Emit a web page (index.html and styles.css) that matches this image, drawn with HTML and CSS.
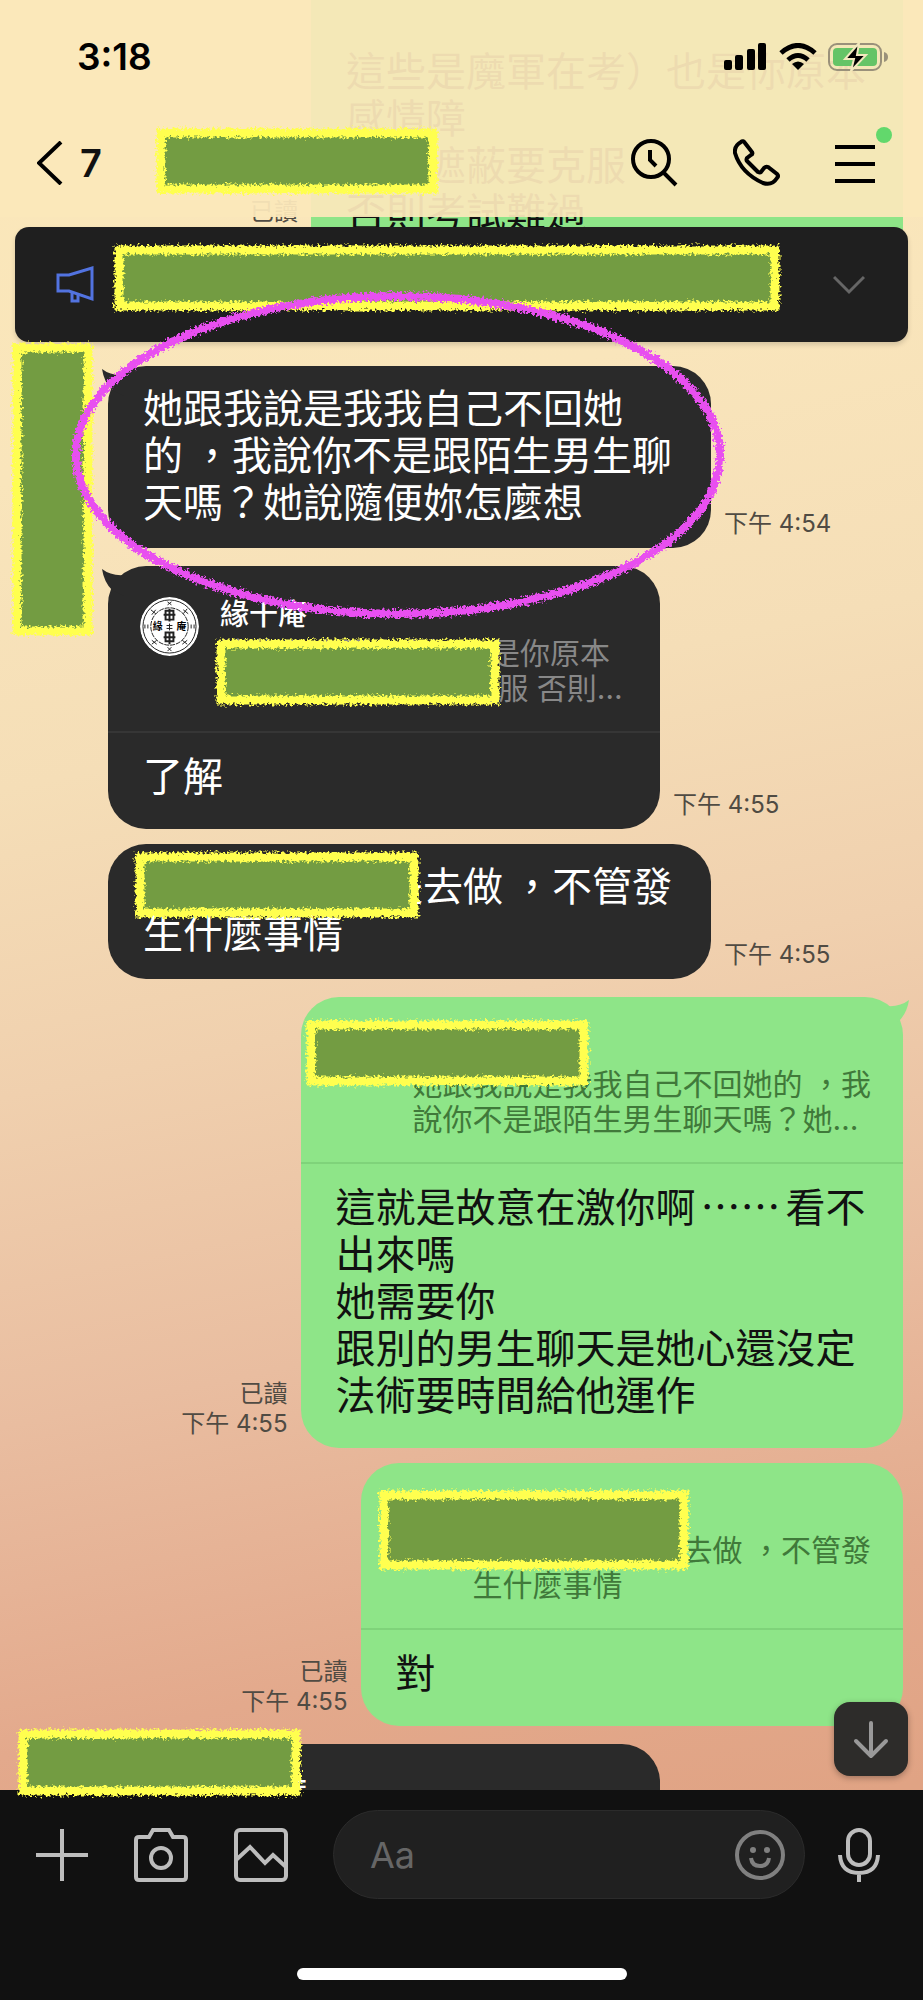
FILE: index.html
```html
<!DOCTYPE html>
<html lang="zh-Hant">
<head>
    <meta charset="utf-8">
    <title>Chat</title>
    <link rel="stylesheet" href="styles.css">
</head>
<body>
    <div class="phone">

        <!-- Conversation, runs underneath the header -->
        <main class="chat">
            <div class="row mine cut">
                <div class="meta">已讀<br>下午 4:53</div>
                <div class="bubble">
                    <p class="text">這些是魔軍在考）也是你原本<br>感情障<br>　　遮蔽要克服<br>否則考試難過</p>
                </div>
            </div>

            <div class="row theirs first">
                <div class="bubble">
                    <svg class="tail" viewBox="0 0 24 30"><path d="M0 3Q9 10 22 9V30L10 24Q2 16 0 3Z"/></svg>
                    <p class="text">她跟我說是我我自己不回她<br>的 ，我說你不是跟陌生男生聊<br>天嗎？她說隨便妳怎麼想</p>
                </div>
                <div class="meta">下午 4:54</div>
            </div>

            <div class="row theirs next">
                <div class="bubble fixed">
                    <svg class="tail" viewBox="0 0 24 30"><path d="M0 3Q9 10 22 9V30L10 24Q2 16 0 3Z"/></svg>
                    <div class="quote">
                        <svg class="avatar" viewBox="0 0 60 60">
                            <circle cx="30" cy="30" r="30" fill="#fff"/>
                            <g fill="none" stroke="#222">
                                <circle cx="30" cy="30" r="27" stroke-width="1"/>
                                <circle cx="30" cy="30" r="19" stroke-width="1" stroke-dasharray="5 1"/>
                                <path stroke-width="2" d="M26 14h8v9h-8zM24 18h12M30 12v13M26 36h8v9h-8zM24 41h12M30 35v13"/>
                                <path stroke-width="1" d="M28 5l4 3m-4 0l4-3M11 13l5 4m-4 1l4-5M44 13l5 4m-5 0l4-5M5 28v4m3-4v4M52 28v4m3-4v4M12 44l5 4m-5 0l5-4M43 44l5 4m-5 0l5-4M28 51l4 4m-4 0l4-4M27 29h6M27 32h6M30 27v7"/>
                            </g>
                            <text x="13" y="34" class="seal">緣</text>
                            <text x="37" y="34" class="seal">庵</text>
                        </svg>
                        <div class="quoted">
                            <strong>緣十庵</strong>
                            <p>這些是魔軍在考）也是你原本<br>感情障 　　遮蔽要克服 否則…</p>
                        </div>
                    </div>
                    <p class="text">了解</p>
                </div>
                <div class="meta">下午 4:55</div>
            </div>

            <div class="row theirs">
                <div class="bubble">
                    <p class="text">　　　　　　是去做 ，不管發<br>生什麼事情</p>
                </div>
                <div class="meta">下午 4:55</div>
            </div>

            <div class="row mine next">
                <div class="meta">已讀<br>下午 4:55</div>
                <div class="bubble">
                    <svg class="tail" viewBox="0 0 24 30"><path d="M24 3Q15 10 2 9V30L14 24Q22 16 24 3Z"/></svg>
                    <div class="quote">
                        <div class="avatar"></div>
                        <div class="quoted">
                            <strong>　</strong>
                            <p>她跟我說是我我自己不回她的 ，我<br>說你不是跟陌生男生聊天嗎？她…</p>
                        </div>
                    </div>
                    <p class="text">這就是故意在激你啊<span class="dots">⋯⋯</span>看不<br>出來嗎<br>她需要你<br>跟別的男生聊天是她心還沒定<br>法術要時間給他運作</p>
                </div>
            </div>

            <div class="row mine">
                <div class="meta">已讀<br>下午 4:55</div>
                <div class="bubble">
                    <div class="quote">
                        <div class="avatar"></div>
                        <div class="quoted">
                            <strong>　</strong>
                            <p>　　　　　　　去做 ，不管發<br>生什麼事情</p>
                        </div>
                    </div>
                    <p class="text">對</p>
                </div>
            </div>

            <div class="row theirs next">
                <div class="bubble fixed">
                    <div class="quote">
                        <div class="avatar"></div>
                        <div class="quoted"><strong>緣十庵</strong></div>
                    </div>
                </div>
            </div>

            <button class="jump" aria-label="Scroll to latest">
                <svg width="42" height="42" viewBox="0 0 42 42"><path d="M21 5v33M6 23l15 15 15-15"/></svg>
            </button>
        </main>

        <header class="top">
            <div class="status">
                <span class="clock">3:18</span>
                <div class="signals">
                    <svg width="44" height="28" viewBox="0 0 44 28">
                        <rect x="0" y="17" width="8" height="10" rx="2"/>
                        <rect x="11" y="12" width="8" height="15" rx="2"/>
                        <rect x="23" y="6" width="8" height="21" rx="2"/>
                        <rect x="34" y="0" width="8" height="27" rx="2"/>
                    </svg>
                    <svg width="38" height="28" viewBox="0 0 38 28">
                        <g fill="none" stroke="#000" stroke-width="5">
                            <path d="M2 10Q19 -5 36 10"/>
                            <path d="M9 17Q19 8 29 17"/>
                        </g>
                        <path d="M13 21Q19 16 25 21L19 27Z"/>
                    </svg>
                    <svg width="62" height="28" viewBox="0 0 62 28">
                        <rect x="1" y="1" width="52" height="26" rx="8" fill="none" stroke="#9a917a" stroke-width="2"/>
                        <rect x="5" y="5" width="44" height="18" rx="4" fill="#65c466"/>
                        <path d="M56 9q4 1 4 5t-4 5z" fill="#9a917a"/>
                        <path d="M31 0L17 16h9l-3 12L38 12h-9z" stroke="#f2e8bd" stroke-width="2"/>
                    </svg>
                </div>
            </div>
            <nav class="bar">
                <a class="back" href="#">
                    <svg width="26" height="44" viewBox="0 0 26 44"><path d="M24 1L2 22l22 21"/></svg>
                    7
                </a>
                <div class="tools">
                    <button aria-label="Search">
                        <svg width="48" height="48" viewBox="0 0 48 48"><circle cx="20" cy="20" r="18"/><path d="M32 33l13 13M19 11v10l6 6"/></svg>
                    </button>
                    <button aria-label="Call">
                        <svg width="48" height="48" viewBox="0 0 48 48"><path d="M8 3Q10 1 12 4L19 13Q20 15 18 16L14 19Q13 21 14 22L25 33Q27 34 28 33L31 29Q33 27 35 28L44 35Q46 37 44 39Q39 47 30 44Q8 34 2 14Q1 7 8 3Z"/></svg>
                    </button>
                    <button class="menu" aria-label="Menu">
                        <svg width="40" height="48" viewBox="0 0 40 48"><path d="M0 8h40M0 25h40M0 42h40"/></svg>
                    </button>
                </div>
            </nav>
        </header>

        <button class="notice" aria-label="Announcement">
            <svg width="40" height="38" viewBox="0 0 40 38" class="horn"><path d="M2 9h11L36 2v31L13 25H2zM16 27v8h6v-6"/></svg>
            <svg width="32" height="20" viewBox="0 0 32 20" class="more"><path d="M1 2l15 15L31 2"/></svg>
        </button>

        <footer class="composer">
            <div class="inputs">
                <div class="attach">
                    <button aria-label="Add"><svg width="52" height="52" viewBox="0 0 52 52"><path d="M26 0v52M0 26h52"/></svg></button>
                    <button aria-label="Camera"><svg width="54" height="54" viewBox="0 0 54 54"><path d="M5 9h10l4-7h16l4 7h10q3 0 3 3v37q0 3-3 3H5q-3 0-3-3V12q0-3 3-3z"/><circle cx="27" cy="30" r="10"/></svg></button>
                    <button aria-label="Photos"><svg width="54" height="54" viewBox="0 0 54 54"><rect x="2" y="2" width="50" height="50" rx="4"/><path d="M2 32l14-13 15 16 8-8 13 12"/></svg></button>
                </div>
                <div class="field">
                    <input type="text" placeholder="Aa" aria-label="Message">
                    <button aria-label="Stickers"><svg width="50" height="50" viewBox="0 0 50 50"><circle cx="25" cy="25" r="23"/><path d="M16 28q1 8 9 8t9-8"/><g class="eyes"><circle cx="18" cy="20" r="3"/><circle cx="32" cy="20" r="3"/></g></svg></button>
                </div>
                <button aria-label="Voice"><svg width="42" height="54" viewBox="0 0 42 54"><rect x="10" y="2" width="22" height="35" rx="11"/><path d="M2 27q1 18 19 18t19-18M21 45v9"/></svg></button>
            </div>
            <div class="home"></div>
        </footer>

        <!-- Chalk markup drawn over the conversation -->
        <svg class="markup" viewBox="0 0 923 2000" preserveAspectRatio="none">
            <filter id="chalk" x="-5%" y="-5%" width="110%" height="110%">
                <feTurbulence type="fractalNoise" baseFrequency="0.4" numOctaves="2" seed="4"/>
                <feDisplacementMap in="SourceGraphic" scale="9" xChannelSelector="R" yChannelSelector="G"/>
            </filter>
            <g filter="url(#chalk)">
                <g class="cover">
                    <rect x="161" y="133" width="272" height="56"/>
                    <rect x="119" y="250" width="656" height="56"/>
                    <rect x="17" y="348" width="71" height="283"/>
                    <rect x="221" y="644" width="274" height="56"/>
                    <rect x="140" y="857" width="274" height="56"/>
                    <rect x="311" y="1025" width="273" height="56"/>
                    <rect x="384" y="1495" width="300" height="70"/>
                    <rect x="23" y="1734" width="273" height="57"/>
                </g>
                <ellipse class="ring" cx="398" cy="455" rx="322" ry="159"/>
            </g>
        </svg>
    </div>
</body>
</html>
```
FILE: styles.css
```css
* {
    box-sizing: border-box;
}

body {
    margin: 0;
    font-family: "Noto Sans CJK TC", "Noto Sans", sans-serif;
    background: #000;
}

p {
    margin: 0;
}

button {
    padding: 0;
    border: none;
    background: none;
    display: flex;
    cursor: pointer;
}

svg {
    display: block;
}

.phone {
    position: relative;
    height: 100vh;
    min-height: 1200px;
    display: flex;
    flex-direction: column;
    overflow: hidden;
    background: linear-gradient(168deg, #fbe8b9 0%, #f9e5bb 22%, #f5deb7 36%, #f0d0ae 50%, #e9bda0 65%, #e3a98c 80%, #e0a384 90%);
}

/* Conversation */
.chat {
    position: relative;
    flex: 1;
    min-height: 0;
    overflow: hidden;
}

.row {
    display: flex;
    align-items: flex-end;
    gap: 13px;
    margin-top: 15px;
    padding: 0 20px 0 108px;
}

.row.next {
    margin-top: 18px;
}

.row.cut {
    margin-top: 0;
}

.row.first {
    margin-top: 100px;
}

.mine {
    justify-content: flex-end;
}

.bubble {
    position: relative;
    border-radius: 38px;
    background: #2a2a2a;
    color: #fff;
}

.bubble.fixed {
    width: 552px;
}

.mine .bubble {
    background: #8ee588;
    color: #111;
}

.cut .bubble {
    border-radius: 0 0 38px 38px;
    padding: 29px 0 8px;
    width: 592px;
}

.text {
    padding: 17px 39px 24px 35px;
    font-size: 40px;
    line-height: 47px;
    white-space: nowrap;
}

.mine .text {
    padding-right: 36px;
}

.quote + .text {
    padding-top: 18px;
    padding-bottom: 31px;
}

.dots {
    padding: 0 5px;
}

.tail {
    position: absolute;
    top: 0;
    left: -6px;
    width: 24px;
    height: 30px;
    fill: #2a2a2a;
}

.mine .tail {
    left: auto;
    right: -6px;
    fill: #8ee588;
}

.quote {
    display: flex;
    gap: 21px;
    height: 167px;
    padding: 31px 32px 0;
    border-bottom: 2px solid #363636;
}

.mine .quote {
    border-color: #7fd37a;
}

.avatar {
    flex: none;
    width: 59px;
    height: 59px;
    border-radius: 50%;
}

.seal {
    font-size: 10px;
    font-weight: 700;
}

.quoted {
    font-family: Inter, "Noto Sans CJK TC", sans-serif;
    font-size: 30px;
    line-height: 35px;
    white-space: nowrap;
    color: #888;
}

.mine .quoted {
    color: #40793a;
}

.quoted strong {
    display: block;
    margin-bottom: 4px;
    font-size: 29px;
    font-weight: 500;
    color: #fff;
}

.meta {
    padding-bottom: 9px;
    font-family: Inter, "Noto Sans CJK TC", sans-serif;
    font-size: 24px;
    line-height: 30px;
    text-align: right;
    white-space: nowrap;
    color: #504b43;
}

.jump {
    position: absolute;
    right: 15px;
    bottom: 14px;
    width: 74px;
    height: 74px;
    align-items: center;
    justify-content: center;
    border-radius: 16px;
    background: #2d2c2a;
    box-shadow: 0 2px 6px rgba(0, 0, 0, 0.3);
}

.jump svg {
    fill: none;
    stroke: #999;
    stroke-width: 4;
    stroke-linecap: round;
    stroke-linejoin: round;
}

/* Header */
.top {
    position: absolute;
    top: 0;
    left: 0;
    right: 0;
    height: 217px;
    background: rgba(251, 232, 186, 0.94);
}

.status {
    display: flex;
    justify-content: space-between;
    align-items: center;
    height: 113px;
    padding: 0 33px 0 77px;
}

.clock {
    font-family: Inter, sans-serif;
    font-size: 37px;
    font-weight: 600;
}

.signals {
    display: flex;
    gap: 11px;
}

.bar {
    display: flex;
    justify-content: space-between;
    align-items: center;
    height: 100px;
    padding: 0 48px 0 37px;
}

.back {
    display: flex;
    align-items: center;
    gap: 17px;
    font-family: Inter, sans-serif;
    font-size: 38px;
    font-weight: 600;
    color: #111;
    text-decoration: none;
}

.back svg,
.tools svg {
    fill: none;
    stroke: #000;
    stroke-width: 4;
}

.tools {
    display: flex;
    align-items: center;
    gap: 54px;
}

.menu {
    position: relative;
}

.menu::after {
    content: "";
    position: absolute;
    top: -12px;
    right: -17px;
    width: 16px;
    height: 16px;
    border-radius: 50%;
    background: #62d86c;
}

/* Announcement */
.notice {
    position: absolute;
    top: 227px;
    left: 15px;
    right: 15px;
    height: 115px;
    padding: 0 43px 0 41px;
    justify-content: space-between;
    align-items: center;
    border-radius: 14px;
    background: #1f1f1f;
    box-shadow: 0 3px 5px rgba(0, 0, 0, 0.15);
}

.notice svg {
    fill: none;
    stroke-width: 3;
}

.horn {
    stroke: #5273e0;
}

.more {
    stroke: #666;
}

/* Composer */
.composer {
    flex: none;
    height: 210px;
    background: #111;
}

.inputs {
    display: flex;
    align-items: center;
    padding: 20px 43px 0 36px;
}

.inputs svg {
    fill: none;
    stroke: #bdbdbd;
    stroke-width: 4;
}

.attach {
    display: flex;
    align-items: center;
    gap: 46px;
}

.field {
    display: flex;
    flex: 1;
    min-width: 0;
    align-items: center;
    height: 89px;
    margin: 0 33px 0 45px;
    padding: 0 19px 0 36px;
    border: 1px solid #2b2b2b;
    border-radius: 45px;
    background: #202020;
}

.field input {
    flex: 1;
    width: 0;
    min-width: 0;
    padding: 0;
    border: none;
    outline: none;
    background: none;
    color: #fff;
    font-family: Inter, "Noto Sans CJK TC", sans-serif;
    font-size: 36px;
}

.field input::placeholder {
    color: #666;
}

.field svg {
    stroke: #808080;
}

.field .eyes {
    fill: #808080;
    stroke: none;
}

.home {
    width: 330px;
    height: 12px;
    margin: 69px auto 0;
    border-radius: 6px;
    background: #fff;
}

/* Markup layer */
.markup {
    position: absolute;
    top: 0;
    left: 0;
    width: 100%;
    height: 100%;
    pointer-events: none;
}

.cover rect {
    fill: #739c43;
    stroke: #ffff4f;
    stroke-width: 9;
}

.ring {
    fill: none;
    stroke: #e850f0;
    stroke-width: 8;
}
```
